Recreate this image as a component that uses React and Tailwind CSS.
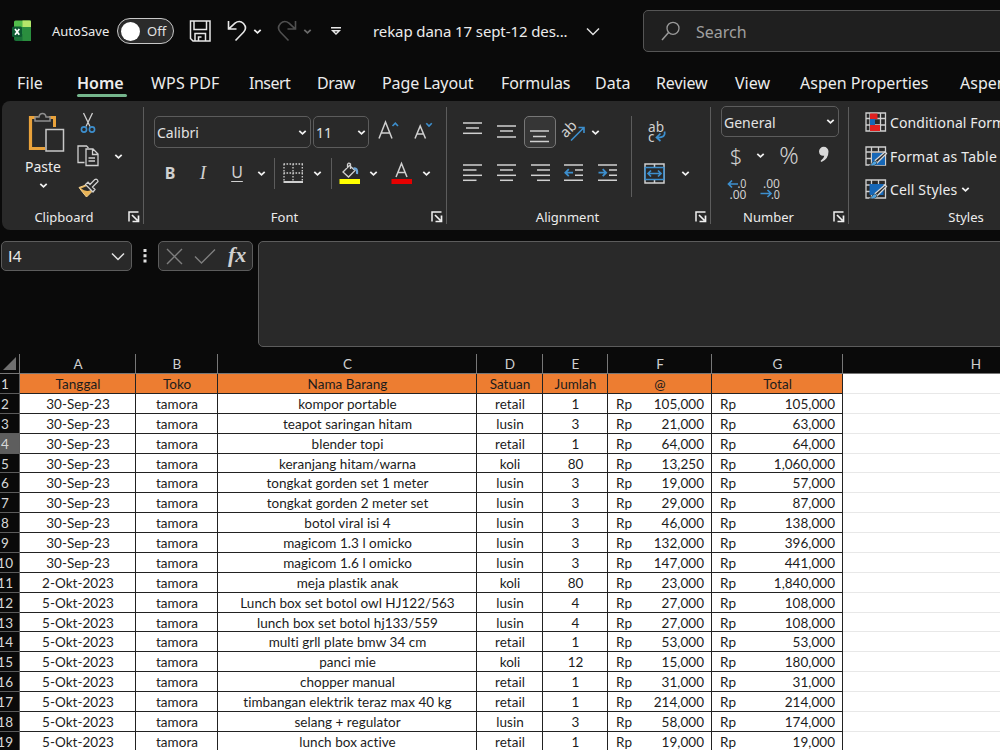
import React from "react";

const tabs = [
  { name: "File", css: "w-[60px] tracking-[0.1px]" },
  { name: "Home", css: "w-[74px] font-semibold tracking-[0px]" },
  { name: "WPS PDF", css: "w-[98px] tracking-[0.2px]" },
  { name: "Insert", css: "w-[68px] tracking-[-0.5px]" },
  { name: "Draw", css: "w-[65px] tracking-[-0.4px]" },
  { name: "Page Layout", css: "w-[119px] tracking-[-0.1px]" },
  { name: "Formulas", css: "w-[94px] tracking-[-0.1px]" },
  { name: "Data", css: "w-[61px]" },
  { name: "Review", css: "w-[79px] tracking-[-0.1px]" },
  { name: "View", css: "w-[65px]" },
  { name: "Aspen Properties", css: "w-[160px]" },
  { name: "Aspen", css: "w-[80px]" },
];

const columns = ["A", "B", "C", "D", "E", "F", "G", "H"];
const gridCols = "grid grid-rows-[100%] grid-cols-[20px_116px_82px_259px_66px_65px_104px_131px_266px]";

const rows = [
  ["30-Sep-23", "kompor portable", "retail", "1", "105,000", "105,000"],
  ["30-Sep-23", "teapot saringan hitam", "lusin", "3", "21,000", "63,000"],
  ["30-Sep-23", "blender topi", "retail", "1", "64,000", "64,000"],
  ["30-Sep-23", "keranjang hitam/warna", "koli", "80", "13,250", "1,060,000"],
  ["30-Sep-23", "tongkat gorden set 1 meter", "lusin", "3", "19,000", "57,000"],
  ["30-Sep-23", "tongkat gorden 2 meter set", "lusin", "3", "29,000", "87,000"],
  ["30-Sep-23", "botol viral isi 4", "lusin", "3", "46,000", "138,000"],
  ["30-Sep-23", "magicom 1.3 l omicko", "lusin", "3", "132,000", "396,000"],
  ["30-Sep-23", "magicom 1.6 l omicko", "lusin", "3", "147,000", "441,000"],
  ["2-Okt-2023", "meja plastik anak", "koli", "80", "23,000", "1,840,000"],
  ["5-Okt-2023", "Lunch box set botol owl HJ122/563", "lusin", "4", "27,000", "108,000"],
  ["5-Okt-2023", "lunch box set botol hj133/559", "lusin", "4", "27,000", "108,000"],
  ["5-Okt-2023", "multi grll plate bmw 34 cm", "retail", "1", "53,000", "53,000"],
  ["5-Okt-2023", "panci mie", "koli", "12", "15,000", "180,000"],
  ["5-Okt-2023", "chopper manual", "retail", "1", "31,000", "31,000"],
  ["5-Okt-2023", "timbangan elektrik teraz max 40 kg", "retail", "1", "214,000", "214,000"],
  ["5-Okt-2023", "selang + regulator", "lusin", "3", "58,000", "174,000"],
  ["5-Okt-2023", "lunch box active", "retail", "1", "19,000", "19,000"],
];

const Svg = ({ w, h, className = "", children }) => (
  <svg
    width={w}
    height={h}
    viewBox={`0 0 ${w} ${h}`}
    fill="none"
    stroke="#d0d0d0"
    strokeWidth="1.3"
    className={`shrink-0 overflow-visible ${className}`}
  >
    {children}
  </svg>
);

// Small ribbon arrow, 9px wide
const Chevron = ({ className = "", color = "#f0f0f0" }) => (
  <Svg w={9} h={7} className={className}>
    <path d="M1.3 1.8 L4.5 4.8 L7.7 1.8" stroke={color} strokeWidth="1.8" />
  </Svg>
);

const BigChevron = ({ className = "" }) => (
  <Svg w={14} h={9} className={className}>
    <path d="M1 1.5 L7 7.5 L13 1.5" stroke="#e0e0e0" strokeWidth="1.5" />
  </Svg>
);

const Lines = ({ list, className = "" }) => (
  <Svg w={20} h={22} className={className}>
    {list.map(([x1, x2, y]) => (
      <path key={y} d={`M${x1} ${y} H${x2}`} strokeWidth="1.5" />
    ))}
  </Svg>
);

const Divider = () => <div className="mt-1.5 h-[117px] w-px shrink-0 bg-[#5c5c5c]" />;

const GroupLabel = ({ name, width, gap = "", launcher = true }) => (
  <div className="flex h-6 items-center text-[13px] leading-none text-[#ececec]">
    <span className={`shrink-0 text-center ${width}`}>{name}</span>
    {launcher && (
      <Svg w={12} h={12} className={gap}>
        <path d="M1 10.5 V1 H10.5" stroke="#f0f0f0" strokeWidth="1.5" />
        <path d="M4 4 L9.5 9.5 M10.5 4.5 V10.5 H4.5" stroke="#f0f0f0" strokeWidth="1.7" />
      </Svg>
    )}
  </div>
);

const TitleBar = () => (
  <header className="flex h-[62px] items-center">
    <Svg w={20} h={22} className="ml-3">
      <g stroke="none">
        <path d="M3.5 0.5 h15.5 v6.5 H2 V2 q0-1.5 1.5-1.5z" fill="#52bd4b" />
        <path d="M10.5 0.5 h7 q1.5 0 1.5 1.5 v5 h-8.5z" fill="#b5e66a" />
        <rect x="2" y="7" width="17" height="7" fill="#249247" />
        <path d="M2 14 h17 v5 q0 2 -2 2 H4 q-2 0 -2-2z" fill="#1a7338" />
        <rect x="10.5" y="7" width="8.5" height="14" fill="#2a8e3e" />
        <rect x="0" y="6.5" width="10" height="10.5" rx="1.5" fill="#0d5931" />
      </g>
      <path d="M3 9 L7.3 14.7 M7.3 9 L3 14.7" stroke="#fff" strokeWidth="1.7" />
    </Svg>
    <span className="ml-5 mt-0.5 w-[65px] shrink-0 text-[13px] text-[#ececec]">AutoSave</span>
    <div className="flex h-[26px] w-[57px] shrink-0 items-center rounded-full border-[1.5px] border-[#c8c8c8] bg-[#2b2b2b] pl-[3px]">
      <div className="size-[19px] rounded-full bg-white" />
      <span className="ml-[7px] mt-0.5 text-[13px] text-[#e2e2e2]">Off</span>
    </div>
    <Svg w={22} h={22} className="ml-[15px]">
      <g stroke="#e8e8e8" strokeWidth="1.5">
        <path d="M1.5 1 H21 V21 H4 L1.5 18.5 Z" />
        <path d="M5 1 V9.5 H17.5 V1" />
        <path d="M6 21 V13.5 H16.5 V21 M9.5 21 V17 H12.5" />
      </g>
    </Svg>
    <Svg w={20} h={22} className="ml-4">
      <path d="M1.5 1 V9 H9.5 M1.8 8.8 L8 3.2 Q12.5 -0.3 16.5 3.5 Q20.5 8 16.5 12.2 L8.5 20.5" stroke="#e8e8e8" strokeWidth="1.6" />
    </Svg>
    <Chevron className="ml-1.5" />
    <Svg w={20} h={22} className="ml-[15px]">
      <path d="M18.5 1 V9 H10.5 M18.2 8.8 L12 3.2 Q7.5 -0.3 3.5 3.5 Q-0.5 8 3.5 12.2 L11.5 20.5" stroke="#505050" strokeWidth="1.6" />
    </Svg>
    <Chevron className="ml-1.5" color="#6a6a6a" />
    <Svg w={12} h={10} className="ml-[18px]">
      <path d="M1 1.7 H11 M2.7 4.8 H9.3 L6 8 Z" stroke="#e8e8e8" strokeWidth="1.4" />
    </Svg>
    <span className="ml-[31px] w-[213px] shrink-0 whitespace-nowrap text-[15px] tracking-[-0.1px] text-[#ececec]">
      rekap dana 17 sept-12 des...
    </span>
    <BigChevron />
    <div className="ml-[43px] flex h-[42px] w-[400px] shrink-0 items-center rounded-[5px] border border-[#555] bg-[#1f1f1f] pl-[17px]">
      <Svg w={20} h={21}>
        <circle cx="12" cy="7.3" r="6" stroke="#9a9a9a" />
        <path d="M7.6 11.5 L1 19" stroke="#9a9a9a" strokeWidth="1.5" />
      </Svg>
      <span className="ml-[15px] mt-px text-[16px] text-[#a0a0a0]">Search</span>
    </div>
  </header>
);

const Tabs = () => (
  <nav className="flex h-[39px] pl-[17px] pt-[9px] text-[16px] text-[#ececec]">
    {tabs.map((tab) => (
      <div key={tab.name} className={`shrink-0 whitespace-nowrap leading-6 ${tab.css}`}>
        {tab.name}
        {tab.name === "Home" && <div className="-mt-px h-[3px] w-[50px] rounded bg-[#74b58c]" />}
      </div>
    ))}
  </nav>
);

const Clipboard = () => (
  <section className="w-[141px] shrink-0">
    <div className="flex h-[104px]">
      <div className="ml-[17px] flex w-12 flex-col items-center">
        <Svg w={38} h={42} className="mt-[10px] ml-[8px]">
          <path d="M10 6.5 H2.5 V37.5 H17" stroke="#e9a23b" strokeWidth="3.2" />
          <path d="M21 6.5 H26.5 V16" stroke="#e9a23b" strokeWidth="3" />
          <path d="M7 10 V6 H11 Q11.5 2.5 14.5 2.5 Q17.5 2.5 18 6 H22 V10 Z" fill="#292929" stroke="#8f8f8f" strokeWidth="1.5" />
          <rect x="18" y="18.5" width="17.5" height="21.5" fill="#292929" stroke="#c8c8c8" strokeWidth="1.5" />
        </Svg>
        <span className="mt-[3px] text-[14px] leading-[22px] text-[#ececec]">Paste</span>
        <Chevron className="mt-1" />
      </div>
      <div className="ml-[10px] flex flex-col">
        <Svg w={22} h={22} className="mt-[11px]">
          <path d="M6.5 1 L13 14.5 M15.5 1 L9 14.5" />
          <circle cx="7" cy="17.5" r="2.6" stroke="#3d8fce" strokeWidth="1.6" />
          <circle cx="15" cy="17.5" r="2.6" stroke="#3d8fce" strokeWidth="1.6" />
        </Svg>
        <Svg w={22} h={22} className="mt-[11px]">
          <path d="M7.5 17.5 H1 V1 H9.5 L11.5 3" />
          <path d="M9 4 H16 L21 9 V20.5 H9 Z M15.5 4.5 V9.5 H20.5 M11.5 13 H18 M11.5 16 H18" />
        </Svg>
        <Svg w={22} h={22} className="mt-[10px]">
          <path d="M2 10.5 L9 8 L15 14.5 L9.5 20 Q6 16 2 10.5Z" fill="#e9b457" stroke="#f0cf90" strokeWidth="1" />
          <path d="M4 11.5 L10 9 L14 13 Q9 15.5 4 11.5Z" fill="#292929" stroke="none" />
          <path d="M8.5 7.5 L16 15 L18 12.5 L15.5 10 L21 4.5 Q20.5 1.5 17.8 2.5 L13 7.5 L11 5.2 Z" fill="#292929" />
        </Svg>
      </div>
      <Chevron className="ml-[15px] mt-[52px]" />
    </div>
    <GroupLabel name="Clipboard" width="w-[124px]" gap="ml-[2px]" />
  </section>
);

const FontGroup = () => (
  <section className="w-[302px] shrink-0 text-[#d0d0d0]">
    <div className="h-[104px] pt-[15px]">
      <div className="flex h-8 items-center">
        <div className="ml-[10px] flex h-8 w-[157px] items-center justify-between rounded-[5px] border border-[#5c5c5c] pl-[2px] pr-[3px] text-[14px] text-[#e2e2e2]">
          <span>Calibri</span>
          <Chevron />
        </div>
        <div className="ml-0.5 flex h-8 w-14 items-center justify-between rounded-[5px] border border-[#5c5c5c] pl-[2px] pr-[2px] text-[14px] text-[#e2e2e2]">
          <span>11</span>
          <Chevron />
        </div>
        <Svg w={21} h={20} className="ml-[9px] -mt-1">
          <path d="M1 18.5 L7.5 2 L14 18.5 M3.3 13 H11.7" strokeWidth="1.5" />
          <path d="M14.5 6 L17.3 3.2 L20 6" stroke="#3d8fce" strokeWidth="1.6" />
        </Svg>
        <Svg w={20} h={20} className="ml-[15px] -mt-1">
          <path d="M1 18.5 L6.2 6 L11.5 18.5 M3 14 H9.5" strokeWidth="1.5" />
          <path d="M12.3 3.2 L15 6 L17.8 3.2" stroke="#3d8fce" strokeWidth="1.6" />
        </Svg>
      </div>
      <div className="mt-[9px] flex h-8 items-center">
        <span className="ml-4 w-5 text-center text-[16px] font-bold">B</span>
        <span className="ml-[13px] w-5 text-center font-['Liberation_Serif'] text-[19px] italic">I</span>
        <span className="ml-[14px] -mt-0.5 w-5 text-center text-[16px] underline underline-offset-[3px]">U</span>
        <Chevron className="ml-[10px]" />
        <div className="ml-[8px] h-[31px] w-px bg-[#5c5c5c]" />
        <Svg w={21} h={21} className="ml-[8px]">
          <path d="M0.5 1 H20 M0.5 10 H20 M1 1 V18 M10 1 V18 M19.3 1 V18" strokeDasharray="1.6 1.4" />
          <path d="M0.5 19 H20" strokeWidth="2" />
        </Svg>
        <Chevron className="ml-[9px]" />
        <div className="ml-[9px] h-[31px] w-px bg-[#5c5c5c]" />
        <Svg w={22} h={23} className="ml-[7px]">
          <path d="M10.5 3.5 L4 10 L9.5 15 L16 8.5 L10 3 M8.5 6 V2.5 Q9.5 0 11.5 2 V7" />
          <path d="M14.5 6.5 Q18.8 5.5 18 12" stroke="#6ba5d8" strokeWidth="2.2" />
          <rect x="0.5" y="17" width="20.5" height="5" fill="#ffff00" stroke="none" />
        </Svg>
        <Chevron className="ml-2" />
        <Svg w={22} h={23} className="ml-[13px]">
          <path d="M5 15 L10.5 1.5 L16 15 M7 10.5 H14" strokeWidth="1.5" />
          <rect x="0.5" y="17" width="20.5" height="5" fill="#e60000" stroke="none" />
        </Svg>
        <Chevron className="ml-[9px]" />
      </div>
    </div>
    <GroupLabel name="Font" width="w-[281px]" gap="ml-1.5" />
  </section>
);

const Alignment = () => (
  <section className="w-[263px] shrink-0">
    <div className="flex h-[104px] pt-[15px]">
      <div className="w-[184px]">
        <div className="flex h-8 items-center pl-4">
          <Lines className="-mt-0.5" list={[[0, 19, 3], [3, 16, 8], [0, 19, 13.3]]} />
          <Lines className="ml-[14px] -mt-0.5" list={[[0, 19, 6], [3, 16, 11], [0, 19, 17]]} />
          <div className="ml-[7px] flex h-8 w-8 items-center justify-center rounded-[5px] border border-[#777] bg-[#363636]">
            <Lines list={[[0, 19, 10], [3, 16, 15.5], [0, 19, 20.5]]} />
          </div>
          <Svg w={23} h={23} className="ml-[7px] -mt-0.5">
            <text x="-1.5" y="14" transform="rotate(-45 6 11)" fontSize="14.5" fill="#d0d0d0" stroke="none">ab</text>
            <path d="M8 20.5 L21 7.5 M15.5 7.5 H21 V13" stroke="#3d8fce" strokeWidth="1.6" />
          </Svg>
          <Chevron className="ml-[5px]" />
        </div>
        <div className="mt-[9px] flex h-8 items-center pl-4">
          <Lines list={[[0, 19, 3], [0, 13.5, 8], [0, 19, 13.3], [0, 13.5, 18.3]]} />
          <Lines className="ml-[14px]" list={[[0, 19, 3], [3, 16, 8], [0, 19, 13.3], [3, 16, 18.3]]} />
          <Lines className="ml-[14px]" list={[[0, 19, 3], [6, 19, 8], [0, 19, 13.3], [6, 19, 18.3]]} />
          <Svg w={20} h={22} className="ml-[13px]">
            <path d="M0 3 H19 M11 8 H19 M11 13.3 H19 M0 18.3 H19" strokeWidth="1.5" />
            <path d="M9 10.7 H1.5 M4.8 7.2 L1.3 10.7 L4.8 14.2" stroke="#3d8fce" strokeWidth="1.8" />
          </Svg>
          <Svg w={20} h={22} className="ml-[14px]">
            <path d="M0 3 H19 M11 8 H19 M11 13.3 H19 M0 18.3 H19" strokeWidth="1.5" />
            <path d="M0.5 10.7 H8 M4.7 7.2 L8.2 10.7 L4.7 14.2" stroke="#3d8fce" strokeWidth="1.8" />
          </Svg>
        </div>
      </div>
      <div className="h-[81px] w-px bg-[#5c5c5c]" />
      <div>
        <div className="flex h-8 items-center pl-4">
          <Svg w={20} h={24}>
            <g fontSize="15" fill="#d0d0d0" stroke="none">
              <text x="0" y="11.5" textLength="16" lengthAdjust="spacingAndGlyphs">ab</text>
              <text x="0" y="21.5" textLength="6.5" lengthAdjust="spacingAndGlyphs">c</text>
            </g>
            <path d="M16.5 11.5 Q18 18 9 17.5 M12.5 13.5 L8.5 17.5 L12.5 21" stroke="#3d8fce" strokeWidth="1.7" />
          </Svg>
        </div>
        <div className="mt-[9px] flex h-8 items-center pl-3">
          <Svg w={21} h={21}>
            <path d="M1 1 H20 V20 H1 Z M10.5 1 V4 M10.5 17 V20" strokeWidth="1.5" />
            <rect x="1.2" y="4.5" width="18.6" height="12" stroke="#3d8fce" strokeWidth="1.5" fill="#292929" />
            <path d="M4 10.5 H17 M7 7.5 L4 10.5 L7 13.5 M14 7.5 L17 10.5 L14 13.5" stroke="#3d8fce" strokeWidth="1.7" />
          </Svg>
          <Chevron className="ml-4" />
        </div>
      </div>
    </div>
    <GroupLabel name="Alignment" width="w-[241px]" gap="ml-[7px]" />
  </section>
);

const NumberGroup = () => (
  <section className="w-[137px] shrink-0 text-[#d0d0d0]">
    <div className="h-[104px] pt-[5px]">
      <div className="ml-[10px] flex h-[31px] w-[118px] items-center justify-between rounded-[5px] border border-[#5c5c5c] pl-[2px] pr-[3px] text-[14px] text-[#e2e2e2]">
        <span className="mt-px">General</span>
        <Chevron />
      </div>
      <div className="flex h-[36px] items-center">
        <span className="ml-[15px] w-5 text-center text-[22px] font-light">$</span>
        <Chevron className="ml-[10px]" />
        <span className="ml-[12px] w-6 text-center text-[24px] font-light">%</span>
        <Svg w={12} h={18} className="ml-[17px]">
          <path d="M1 5.5 a4.7 4.7 0 1 1 9.5 0 Q10.5 13 3.5 16 L2.5 15 Q6 12.5 6.3 9.7 Q1.5 10.5 1 5.5Z" fill="#d8d8d8" stroke="none" />
        </Svg>
      </div>
      <div className="flex h-[32px] items-center pl-4">
        <Svg w={21} h={22}>
          <g fontSize="12.5" fill="#d0d0d0" stroke="none">
            <text x="10.5" y="10" textLength="9" lengthAdjust="spacingAndGlyphs">.0</text>
            <text x="2.5" y="20.5" textLength="17" lengthAdjust="spacingAndGlyphs">.00</text>
          </g>
          <path d="M11 6 H1.5 M5 2.5 L1.5 6 L5 9.5" stroke="#3d8fce" strokeWidth="1.7" />
        </Svg>
        <Svg w={21} h={22} className="ml-3">
          <g fontSize="12.5" fill="#d0d0d0" stroke="none">
            <text x="3" y="10" textLength="17" lengthAdjust="spacingAndGlyphs">.00</text>
            <text x="11" y="20.5" textLength="9" lengthAdjust="spacingAndGlyphs">.0</text>
          </g>
          <path d="M0.5 15.5 H11 M7.5 12 L11 15.5 L7.5 19" stroke="#3d8fce" strokeWidth="1.7" />
        </Svg>
      </div>
    </div>
    <GroupLabel name="Number" width="w-[115px]" gap="ml-[7px]" />
  </section>
);

const TableBrush = ({ filled }) => (
  <Svg w={22} h={21}>
    <path d="M1 1 H20.5 V19 H1 Z M1 6 H20.5 M6.5 1 V19 M13.5 1 V6 M1 12.5 H6.5" />
    <rect x={filled ? 4.5 : 7} y={filled ? 5 : 7} width={filled ? 14 : 13} height={filled ? 11 : 12} fill="#1667b7" stroke="none" />
    <path d="M20 6 L10 14.5 L12 17 L21.5 7.5 Z" fill="#292929" stroke="#d8d8d8" />
    <path d="M4.5 19.5 Q7 18.5 7.5 16 Q10 13.5 12 16.5 Q11 20.5 4.5 19.5Z" fill="#4ea3e0" stroke="#292929" strokeWidth="0.6" />
  </Svg>
);

const Styles = () => (
  <section className="w-[300px] shrink-0 text-[14px] text-[#ececec]">
    <div className="h-[104px] pl-4 pt-1">
      <div className="flex h-[34px] items-center whitespace-nowrap">
        <Svg w={22} h={21}>
          <path d="M1 1 H20.5 V19 H1 Z M1 6.5 H20.5 M1 13 H20.5 M5 1 V19 M15.5 1 V19" />
          <rect x="5" y="1.5" width="7.5" height="5.5" fill="#e02020" stroke="none" />
          <rect x="5" y="13" width="10" height="6" fill="#e02020" stroke="none" />
          <rect x="5" y="7" width="5" height="6" fill="#1667b7" stroke="none" />
        </Svg>
        <span className="ml-[3px] tracking-[0.1px]">Conditional Formatting</span>
      </div>
      <div className="flex h-[34px] items-center whitespace-nowrap">
        <TableBrush />
        <span className="ml-[3px] tracking-[0.2px]">Format as Table</span>
      </div>
      <div className="flex h-[33px] items-center whitespace-nowrap">
        <TableBrush filled />
        <span className="ml-[3px] tracking-[0.15px]">Cell Styles</span>
        <Chevron className="ml-1" />
      </div>
    </div>
    <GroupLabel name="Styles" width="w-[234px]" launcher={false} />
  </section>
);

const FormulaBar = () => (
  <div className="flex h-[124px] items-start pt-[11px]">
    <div className="ml-px flex h-[30px] w-[131px] shrink-0 items-center justify-between rounded-[5px] border border-[#5c5c5c] bg-[#292929] px-1.5 font-['Lato'] text-[16px] text-[#e8e8e8]">
      <span>I4</span>
      <BigChevron />
    </div>
    <Svg w={4} h={16} className="ml-[11px] mt-[7px]">
      <path d="M2 1 V4 M2 6.3 V9.3 M2 11.6 V14.6" stroke="#e0e0e0" strokeWidth="3" />
    </Svg>
    <div className="ml-[11px] flex h-[30px] w-[95px] shrink-0 items-center rounded-[5px] border border-[#5c5c5c] bg-[#292929] pl-[7px]">
      <Svg w={17} h={17}>
        <path d="M1 1 L16 16 M16 1 L1 16" stroke="#7e7e7e" strokeWidth="1.4" />
      </Svg>
      <Svg w={22} h={17} className="ml-[11px]">
        <path d="M1 8.5 L7.5 15 L21 1.5" stroke="#7e7e7e" strokeWidth="1.4" />
      </Svg>
      <span className="-mt-0.5 ml-3 font-['Liberation_Serif'] text-[22px] font-bold italic leading-none text-[#d0d0d0]">fx</span>
    </div>
    <div className="ml-[5px] h-[106px] w-[760px] shrink-0 rounded-[5px] border border-[#5c5c5c] bg-[#292929]" />
  </div>
);

const HeadCell = ({ children }) => (
  <div className="border-b border-r border-[#222] bg-[#ed7d31] pl-px text-center">{children}</div>
);

const Cell = ({ children }) => (
  <div className="whitespace-nowrap border-b border-r border-[#222] pl-px text-center">{children}</div>
);

const MoneyCell = ({ value }) => (
  <div className="flex justify-between border-b border-r border-[#222] pl-2 pr-[7px]">
    <span>Rp</span>
    <span>{value}</span>
  </div>
);

const RowNumber = ({ n }) => (
  <div
    className={`border-b border-r border-[#5c5c5c] pr-[6px] ${
      n === 4 ? "bg-[#5e5e5e]" : "bg-[#0a0a0a]"
    } ${n > 9 ? "flex justify-end" : "pl-px"} text-[#d8d8d8]`}
  >
    {n}
  </div>
);

const Sheet = () => (
  <div className="bg-white font-['Lato',sans-serif] text-[13.5px] leading-[21.4px] tracking-[0.03px] text-[#1c1c1c]">
    <div className={`${gridCols} h-5 bg-[#0a0a0a] text-[#cfcfcf]`}>
      <div className="flex items-end justify-end border-b border-r border-[#777] pb-[3px] pr-[3px]">
        <Svg w={13} h={13}>
          <path d="M13 0 V13 H0 Z" fill="#707070" stroke="none" />
        </Svg>
      </div>
      {columns.map((c) => (
        <div key={c} className="border-b border-r border-[#777] pl-px text-center leading-[21px]">
          {c}
        </div>
      ))}
    </div>
    <div className={`${gridCols} h-[19.88px]`}>
      <RowNumber n={1} />
      <HeadCell>Tanggal</HeadCell>
      <HeadCell>Toko</HeadCell>
      <HeadCell>Nama Barang</HeadCell>
      <HeadCell>Satuan</HeadCell>
      <HeadCell>Jumlah</HeadCell>
      <HeadCell>@</HeadCell>
      <HeadCell>Total</HeadCell>
      <div className="border-b border-[#e8e8e8]" />
    </div>
    {rows.map(([date, item, unit, qty, price, total], i) => (
      <div key={i} className={`${gridCols} h-[19.88px]`}>
        <RowNumber n={i + 2} />
        <Cell>{date}</Cell>
        <Cell>tamora</Cell>
        <Cell>{item}</Cell>
        <Cell>{unit}</Cell>
        <Cell>{qty}</Cell>
        <MoneyCell value={price} />
        <MoneyCell value={total} />
        <div className="border-b border-[#e8e8e8]" />
      </div>
    ))}
  </div>
);

const App = () => {
  return (
    <div className="h-[750px] w-[1000px] overflow-hidden bg-[#0a0a0a] font-['Noto_Sans',sans-serif]">
      <TitleBar />
      <Tabs />
      <div className="ml-0.5 flex h-[129px] w-[1100px] rounded-lg bg-[#292929]">
        <Clipboard />
        <Divider />
        <FontGroup />
        <Divider />
        <Alignment />
        <Divider />
        <NumberGroup />
        <Divider />
        <Styles />
      </div>
      <FormulaBar />
      <Sheet />
    </div>
  );
};

export default App;
